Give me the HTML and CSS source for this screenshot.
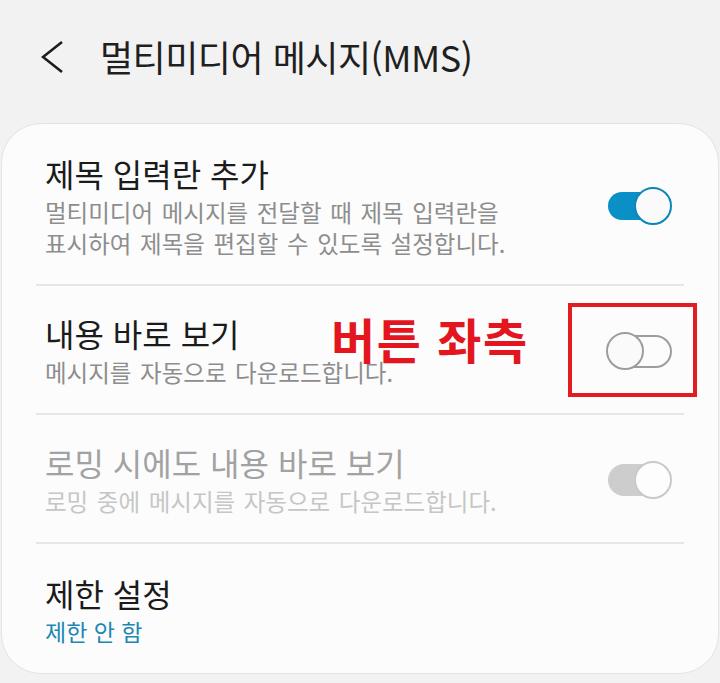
FILE: index.html
```html
<!DOCTYPE html>
<html lang="ko">
<head>
<meta charset="utf-8">
<link rel="stylesheet" href="styles.css">
</head>
<body>
<div class="screen">
  <header class="header">
    <svg class="back" width="24" height="34" viewBox="0 0 24 34"><polyline points="21,2 2,17 21,32" fill="none" stroke="#1c1c1c" stroke-width="2.6"/></svg>
    <h1 class="title"><span>멀티미디어 메시지(MMS)</span></h1>
  </header>
  <section class="card">
    <div class="row">
      <div class="text">
        <div class="row-title">제목 입력란 추가</div>
        <div class="row-sub">멀티미디어 메시지를 전달할 때 제목 입력란을</div>
        <div class="row-sub cont">표시하여 제목을 편집할 수 있도록 설정합니다.</div>
      </div>
      <div class="toggle on"><span class="track"></span><span class="thumb"></span></div>
    </div>
    <div class="row">
      <div class="text">
        <div class="row-title">내용 바로 보기</div>
        <div class="row-sub">메시지를 자동으로 다운로드합니다.</div>
      </div>
      <div class="toggle off"><span class="track"></span><span class="thumb"></span></div>
    </div>
    <div class="row disabled">
      <div class="text">
        <div class="row-title">로밍 시에도 내용 바로 보기</div>
        <div class="row-sub">로밍 중에 메시지를 자동으로 다운로드합니다.</div>
      </div>
      <div class="toggle dis"><span class="track"></span><span class="thumb"></span></div>
    </div>
    <div class="row last">
      <div class="text">
        <div class="row-title">제한 설정</div>
        <div class="row-sub link">제한 안 함</div>
      </div>
    </div>
    <div class="note">버튼 좌측</div>
    <div class="mark"></div>
  </section>
</div>
</body>
</html>
```
FILE: styles.css
```css
* { box-sizing: border-box; }
html, body { margin: 0; padding: 0; }
body {
  background: #f2f2f2;
  font-family: "Noto Sans CJK KR", "Noto Sans", sans-serif;
  width: 720px;
  height: 683px;
  overflow: hidden;
}
.screen { width: 720px; }
.header {
  height: 123px;
  display: flex;
  align-items: center;
  padding: 0 0 12px 41px;
}
.back { display: block; margin-top: 2px; }
.title {
  margin: 0 0 0 35px;
  font-weight: 400;
  font-size: 36px;
  line-height: 46px;
  color: #1f1f1f;
}
.title span { display: inline-block; letter-spacing: -0.5px; }
.card {
  position: relative;
  margin: 0 1px;
  height: 551px;
  background: #fcfcfc;
  border: 1px solid #e3e3e3;
  border-radius: 40px;
}
.row {
  margin: 0 34px;
  padding: 27px 12px 25px 9px;
  display: flex;
  align-items: center;
  justify-content: space-between;
  border-bottom: 2px solid #e6e6e6;
}
.row:first-child { padding-top: 29px; padding-bottom: 25px; }
.row.last { border-bottom: none; padding-top: 29px; padding-bottom: 20px; }
.row-title {
  font-size: 32px;
  line-height: 40px;
  color: #1b1b1b;
}
.row-sub {
  margin-top: 4px;
  font-size: 23.5px;
  line-height: 31px;
  color: #8d8d8d;
  word-spacing: 2px;
  white-space: nowrap;
}
.row-sub.cont { margin-top: 0; }
.row-sub.link { color: #1b87b2; font-size: 23px; word-spacing: 0; margin-top: 3px; }
.disabled .row-title { color: #a2a2a2; }
.disabled .row-sub { color: #c6c6c6; }
.toggle {
  position: relative;
  width: 66px;
  height: 40px;
  flex: none;
}
.track {
  position: absolute;
  left: 2px;
  top: 6px;
  width: 58px;
  height: 28px;
  border-radius: 14px;
}
.thumb {
  position: absolute;
  top: 1px;
  width: 38px;
  height: 38px;
  border-radius: 50%;
  background: #fafafa;
  border: 2px solid;
}
.on .track { background: #0a8fc7; }
.on .thumb { right: 0; border-color: #0b86b9; }
.dis .track { background: #cdcdcd; height: 32px; top: 4px; border-radius: 16px; }
.dis .thumb { right: 0; border-color: #c9c9c9; background: #fdfdfd; }
.off .track { left: 10px; width: 56px; height: 33px; top: 4px; border-radius: 17px; border: 2px solid #9d9d9d; background: transparent; }
.off .thumb { left: 0; border-color: #9d9d9d; }
.note {
  position: absolute;
  left: 329px;
  top: 184px;
  font-size: 48px;
  line-height: 60px;
  font-weight: 700;
  color: #e3161f;
  letter-spacing: 1.5px;
}
.mark {
  position: absolute;
  left: 566px;
  top: 179px;
  width: 129px;
  height: 94px;
  border: 4px solid #e31b23;
}
```
